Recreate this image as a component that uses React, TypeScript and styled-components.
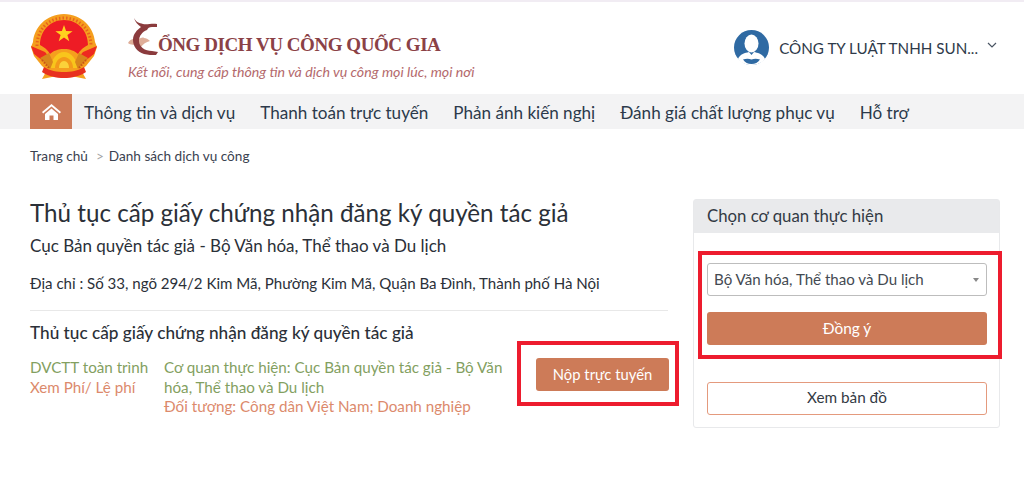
import React from 'react';
import styled, { createGlobalStyle } from 'styled-components';

const GlobalStyle = createGlobalStyle`
  html, body {
    margin: 0;
    padding: 0;
    background: #fff;
  }
  body {
    font-family: 'Lato', 'Noto Sans', sans-serif;
    color: #2c3340;
  }
  * {
    box-sizing: border-box;
  }
`;

const Page = styled.div`
  width: 1024px;
  height: 489px;
  overflow: hidden;
  border-top: 2px solid #f1ecf3;
`;

const Header = styled.header`
  height: 92px;
  padding: 0 26px 0 31px;
  display: flex;
  align-items: flex-start;
`;

const Emblem = styled.svg`
  width: 66px;
  height: 67px;
  margin-top: 12px;
  flex: none;
`;

const Brand = styled.div`
  margin-left: 31px;
  margin-top: 16px;
  width: 360px;
`;

const BrandTitle = styled.div`
  display: flex;
  align-items: flex-end;
  height: 37px;
`;

const BrandMark = styled.svg`
  width: 30px;
  height: 37px;
  flex: none;
`;

const BrandName = styled.span`
  font-family: 'Liberation Serif', serif;
  font-weight: 700;
  font-size: 19px;
  line-height: 24px;
  letter-spacing: -0.45px;
  color: #8b4146;
  margin-bottom: -2px;
`;

const Tagline = styled.div`
  font-style: italic;
  font-size: 14.2px;
  line-height: 18px;
  color: #b4696c;
  margin-top: 8px;
  white-space: nowrap;
`;

const Account = styled.div`
  margin-left: auto;
  margin-top: 28px;
  display: flex;
  align-items: center;
`;

const Avatar = styled.svg`
  width: 35px;
  height: 35px;
  flex: none;
`;

const AccountName = styled.span`
  font-size: 15.2px;
  line-height: 20px;
  margin-left: 10px;
  color: #2f3a4a;
  white-space: nowrap;
`;

const Caret = styled.svg`
  width: 12px;
  height: 12px;
  margin-left: 8px;
  margin-top: -5px;
`;

const Nav = styled.nav`
  height: 35px;
  background: #f3f3f4;
  padding-left: 30px;
  display: flex;
  align-items: stretch;
`;

const HomeLink = styled.a`
  width: 42px;
  background: #cd7b58;
  display: flex;
  align-items: center;
  justify-content: center;
`;

const NavLink = styled.a<{ $gap: number }>`
  font-size: 17.1px;
  line-height: 38px;
  color: #2c3a4b;
  margin-left: ${(p) => p.$gap}px;
  white-space: nowrap;
`;

const Crumbs = styled.div`
  padding: 18px 30px 0;
  font-size: 13.6px;
  line-height: 18px;
  color: #3a4250;
  display: flex;
`;

const CrumbSep = styled.span`
  color: #a5a5a5;
  margin: 0 5px 0 8px;
`;

const Content = styled.div`
  display: flex;
  align-items: flex-start;
  padding: 0 24px 0 30px;
  margin-top: 25px;
`;

const Main = styled.main`
  width: 638px;
  padding-top: 7px;
`;

const Title = styled.h1`
  margin: 0;
  font-size: 24.2px;
  line-height: 32px;
  font-weight: 400;
  color: #2b3038;
  white-space: nowrap;
`;

const Agency = styled.div`
  margin-top: 6px;
  font-size: 17px;
  line-height: 22px;
  color: #2b3038;
`;

const Address = styled.div`
  margin-top: 16px;
  font-size: 15.07px;
  line-height: 20px;
  color: #2b3038;
  white-space: nowrap;
`;

const Divider = styled.hr`
  margin: 17px 0 0;
  border: 0;
  border-top: 1px solid #e8e8e8;
`;

const ProcedureName = styled.h2`
  margin: 12px 0 0;
  font-size: 17.2px;
  line-height: 20px;
  font-weight: 500;
  color: #2b3038;
  white-space: nowrap;
`;

const ProcedureRow = styled.div`
  display: flex;
  align-items: flex-start;
`;

const SideLinks = styled.div`
  width: 134px;
  margin-top: 15px;
  flex: none;
`;

const Details = styled.div`
  width: 346px;
  margin-top: 15px;
  flex: none;
`;

const Line = styled.div<{ $tone: 'green' | 'orange' }>`
  font-size: 15.2px;
  line-height: 19.7px;
  color: ${(p) => (p.$tone === 'green' ? '#83a05f' : '#dc8a6c')};
`;

const Highlight = styled.div`
  border: 4px solid #ed1c2e;
`;

const SubmitHighlight = styled(Highlight)`
  width: 162px;
  height: 65px;
  margin-left: 7px;
  margin-top: -2px;
  flex: none;
  padding: 13px 5px 0 15px;
`;

const SubmitButton = styled.button`
  display: block;
  width: 133px;
  height: 33px;
  border: 0;
  border-radius: 3px;
  background: #cd7b58;
  color: #fff;
  font: inherit;
  font-size: 14.8px;
  padding: 0 0 2px;
`;

const Side = styled.aside`
  width: 307px;
  margin-left: 25px;
  margin-top: 9px;
  border: 1px solid #e8e9eb;
  border-radius: 3px;
  height: 229px;
`;

const SideHead = styled.div`
  height: 33px;
  background: #e9eaec;
  padding: 0 13px;
  font-size: 16.8px;
  line-height: 31px;
  color: #333a44;
`;

const SideHighlight = styled(Highlight)`
  margin: 18px -3px 0 4px;
  height: 108px;
  padding: 8px 11px 0 5px;
`;

const Select = styled.div`
  height: 33px;
  border: 1px solid #bdbdbd;
  border-radius: 3px;
  padding: 0 7px 2px 6px;
  display: flex;
  align-items: center;
  justify-content: space-between;
  font-size: 15.1px;
  color: #444a52;
`;

const SelectArrow = styled.span`
  width: 0;
  height: 0;
  margin-top: 2px;
  border-left: 3.5px solid transparent;
  border-right: 3.5px solid transparent;
  border-top: 4px solid #888;
`;

const AgreeButton = styled.button`
  display: block;
  width: 100%;
  height: 33px;
  margin-top: 16px;
  padding: 0 0 2px;
  border: 0;
  border-radius: 3px;
  background: #cd7b58;
  color: #fff;
  font: inherit;
  font-size: 15.4px;
`;

const MapButton = styled.button`
  display: block;
  width: 280px;
  height: 33px;
  margin: 23px 0 0 13px;
  padding: 0 0 3px;
  border: 1px solid #e49a7d;
  border-radius: 3px;
  background: #fff;
  color: #333a44;
  font: inherit;
  font-size: 15.3px;
`;

const starPoints =
  '33,11 35.1,17.1 41.6,17.2 36.4,21.1 38.300,27.3 33,23.6 27.7,27.3 29.6,21.1 24.4,17.2 30.900,17.1';

const App: React.FC = () => (
  <>
    <GlobalStyle />
    <Page>
      <Header>
        <Emblem viewBox="0 0 66 67">
          {/* gold ring with rice ears */}
          <path d="M33 0C15 0 3 14 2 28L0 33l3 9 8 10 5 4-5 9 15-3h14l15 3-5-9 5-4 8-10 3-9-2-5C63 14 51 0 33 0Z" fill="#f59f1e" />
          <path d="M6 32C6 15 18 4 33 4s27 11 27 28" fill="none" stroke="#e8641c" strokeWidth="3" strokeDasharray="1.500 2" />
          {/* red field */}
          <path d="M33 6C19 6 9 17 9 31c4 2 8 5 10 9 3-3 8-5 14-5s11 2 14 5c2-4 6-7 10-9C57 17 47 6 33 6Z" fill="#ee1c25" />
          <path d="M0 32l14 6 5 6-7 3-9-7Zm66 0-14 6-5 6 7 3 9-7Z" fill="#ee2a20" />
          <polygon points={starPoints} fill="#ffd21f" />
          {/* gear */}
          <path d="M20 54c0-9 6-16 13-16s13 7 13 16Z" fill="#f8c51c" />
          <path d="M24 54c0-6 4-11 9-11s9 5 9 11Z" fill="#f39a1a" />
          <path d="M28 54c0-4 2-7 5-7s5 3 5 7Z" fill="#fbd23a" />
          {/* branches */}
          <path d="M9 44l9-5 4 9-3 7Zm48 0-9-5-4 9 3 7Z" fill="#d8861c" />
          <path d="M11 46l7 8M55 46l-7 8" stroke="#c9541a" strokeWidth="2" strokeDasharray="1.500 1.500" />
          {/* ribbon */}
          <path d="M13 53c6 4 13 5 20 5s14-1 20-5l2 5c-6 4-14 6-22 6s-16-2-22-6Z" fill="#e8301f" />
        </Emblem>
        <Brand>
          <BrandTitle>
            <BrandMark viewBox="0 0 30 37">
              <path d="M0 25c2-4 6-5 9-3 3-2 6-3 7-2 2 0 4 1 6 3-4 1-7 3-9 6-2-1-3-2-4-3-3 1-7 1-9-1Z" fill="#dfae99" />
              <path d="M6 0C8 4 11 5 15 6 19 7 24 5 29 6L29 9 24 9C21 9 20 10 19 12 14 14 11 18 11 23 11 29 17 33 24 33L30 34 28 37C24 37 20 37 16 36 9 34 5 28 5 22 5 16 9 12 13 9 10 7 7 4 6 0Z" fill="#8b3b3d" />
            </BrandMark>
            <BrandName>ỔNG DỊCH VỤ CÔNG QUỐC GIA</BrandName>
          </BrandTitle>
          <Tagline>Kết nối, cung cấp thông tin và dịch vụ công mọi lúc, mọi nơi</Tagline>
        </Brand>
        <Account>
          <Avatar viewBox="0 0 35 35">
            <circle cx="17.5" cy="17.5" r="17.5" fill="#2f6aa3" />
            <ellipse cx="17.5" cy="13.5" rx="7" ry="9" fill="#fff" />
            <path d="M4 29c2-5 7-6 11-7l2.500 3 2.500-3c4 1 9 2 11 7-3 4-8 6-13.500 6S7 33 4 29Z" fill="#fff" />
            <path d="M9 29.500c3-1 6-1 8.500 0 2.500-1 5.500-1 8.500 0-2 3-5 4.500-8.500 4.500S11 32.500 9 29.500Z" fill="#2f6aa3" />
          </Avatar>
          <AccountName>CÔNG TY LUẬT TNHH SUN...</AccountName>
          <Caret viewBox="0 0 12 12">
            <path d="M2 4l4 4 4-4" fill="none" stroke="#4a5563" strokeWidth="1.200" />
          </Caret>
        </Account>
      </Header>
      <Nav>
        <HomeLink>
          <svg width="19" height="16" viewBox="0 0 19 16">
            <path d="M9.500 0 0 8l1.200 1.400L9.500 2.500l8.300 6.900L19 8Z" fill="#fff" />
            <path d="M3 10 9.500 4.500 16 10v6h-4.500v-4.500h-4V16H3Z" fill="#fff" />
          </svg>
        </HomeLink>
        <NavLink $gap={12}>Thông tin và dịch vụ</NavLink>
        <NavLink $gap={25}>Thanh toán trực tuyến</NavLink>
        <NavLink $gap={25}>Phản ánh kiến nghị</NavLink>
        <NavLink $gap={25}>Đánh giá chất lượng phục vụ</NavLink>
        <NavLink $gap={25}>Hỗ trợ</NavLink>
      </Nav>
      <Crumbs>
        <span>Trang chủ</span>
        <CrumbSep>&gt;</CrumbSep>
        <span>Danh sách dịch vụ công</span>
      </Crumbs>
      <Content>
        <Main>
          <Title>Thủ tục cấp giấy chứng nhận đăng ký quyền tác giả</Title>
          <Agency>Cục Bản quyền tác giả - Bộ Văn hóa, Thể thao và Du lịch</Agency>
          <Address>Địa chỉ : Số 33, ngõ 294/2 Kim Mã, Phường Kim Mã, Quận Ba Đình, Thành phố Hà Nội</Address>
          <Divider />
          <ProcedureName>Thủ tục cấp giấy chứng nhận đăng ký quyền tác giả</ProcedureName>
          <ProcedureRow>
            <SideLinks>
              <Line $tone="green">DVCTT toàn trình</Line>
              <Line $tone="orange">Xem Phí/ Lệ phí</Line>
            </SideLinks>
            <Details>
              <Line $tone="green">Cơ quan thực hiện: Cục Bản quyền tác giả - Bộ Văn hóa, Thể thao và Du lịch</Line>
              <Line $tone="orange">Đối tượng: Công dân Việt Nam; Doanh nghiệp</Line>
            </Details>
            <SubmitHighlight>
              <SubmitButton>Nộp trực tuyến</SubmitButton>
            </SubmitHighlight>
          </ProcedureRow>
        </Main>
        <Side>
          <SideHead>Chọn cơ quan thực hiện</SideHead>
          <SideHighlight>
            <Select>
              Bộ Văn hóa, Thể thao và Du lịch
              <SelectArrow />
            </Select>
            <AgreeButton>Đồng ý</AgreeButton>
          </SideHighlight>
          <MapButton>Xem bản đồ</MapButton>
        </Side>
      </Content>
    </Page>
  </>
);

export default App;
